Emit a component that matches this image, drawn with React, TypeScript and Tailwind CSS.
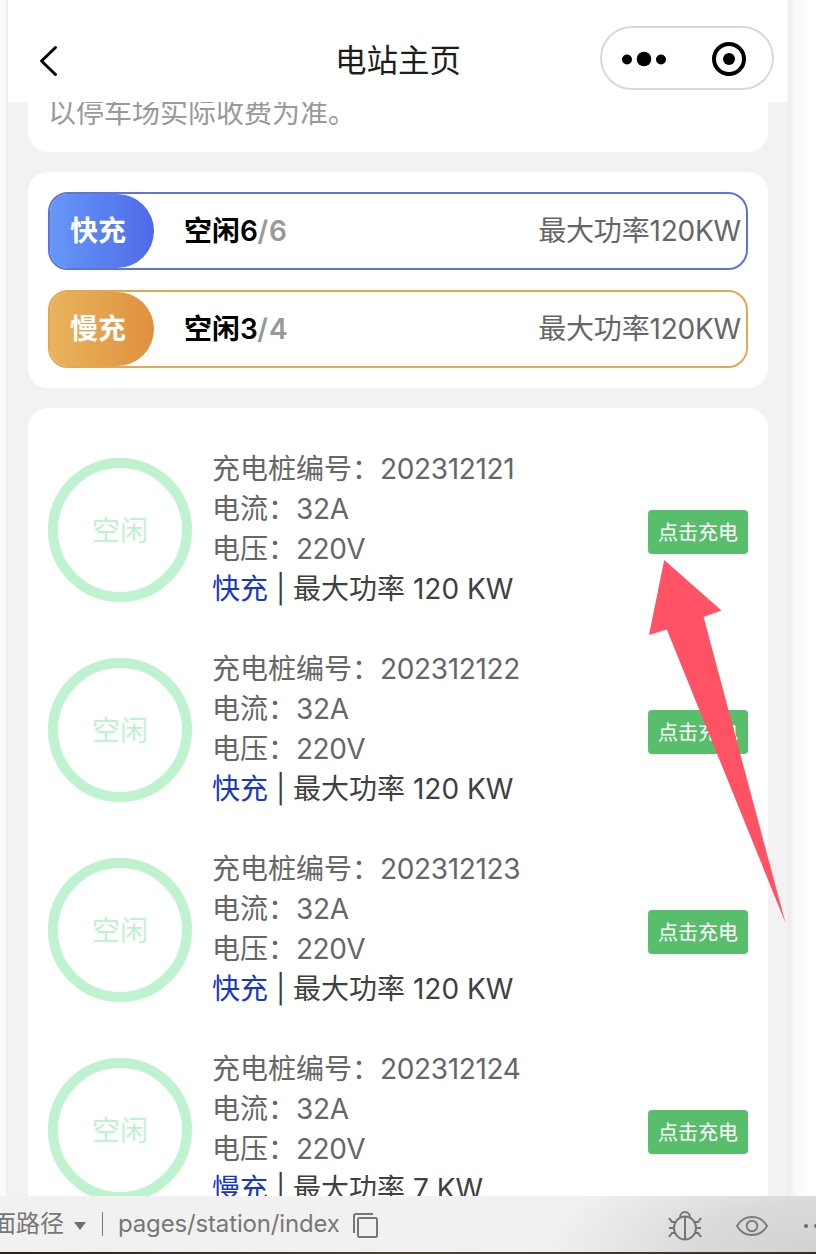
import React from "react";

type Charger = { id: string; type: string; power: string };

const chargers: Charger[] = [
  { id: "202312121", type: "快充", power: "120 KW" },
  { id: "202312122", type: "快充", power: "120 KW" },
  { id: "202312123", type: "快充", power: "120 KW" },
  { id: "202312124", type: "慢充", power: "7 KW" },
];

function Header() {
  return (
    <header className="relative flex h-[102px] shrink-0 items-start bg-white">
      <svg className="mt-[44px] ml-[30px] h-[34px] w-[22px] shrink-0" viewBox="0 0 22 34" fill="none">
        <path d="M17.500 3.500 3.500 17l14 13.500" stroke="#000" strokeWidth="3" strokeLinecap="round" strokeLinejoin="round" />
      </svg>
      <h1 className="mt-[38px] ml-[275px] w-[265px] shrink-0 text-[31.5px] leading-[46px] whitespace-nowrap text-[#1d1d1d]">电站主页</h1>
      <div className="mt-[26px] flex h-[64px] w-[174px] shrink-0 items-center rounded-full border-2 border-[#d9d9d9] pt-[2px]">
        <svg className="ml-[18px] h-[16px] w-[46px]" viewBox="0 0 46 16">
          <circle cx="7" cy="8.5" r="5" />
          <circle cx="24" cy="8" r="7.3" />
          <circle cx="41" cy="8.5" r="5" />
        </svg>
        <svg className="ml-[44px] h-[36px] w-[36px]" viewBox="0 0 36 36">
          <circle cx="19" cy="18" r="15" fill="none" stroke="#000" strokeWidth="4" />
          <circle cx="19" cy="18" r="6" />
        </svg>
      </div>
    </header>
  );
}

function FastRow() {
  return (
    <div className="flex h-[78px] items-center overflow-hidden rounded-[20px] border-2 border-[#5f74d9]">
      <div className="flex h-full w-[104px] shrink-0 items-center rounded-r-[37px] bg-linear-to-r from-[#6797f7] to-[#4e6ae8] pl-[20px] text-[28px] font-bold text-white">
        快充
      </div>
      <Availability free="6" total="6" />
      <span className="mr-[5px] ml-auto text-[28px] tracking-[-0.2px] text-[#666]">最大功率120KW</span>
    </div>
  );
}

function SlowRow() {
  return (
    <div className="flex h-[78px] items-center overflow-hidden rounded-[20px] border-2 border-[#e6a750]">
      <div className="flex h-full w-[104px] shrink-0 items-center rounded-r-[37px] bg-linear-to-r from-[#e8b45d] to-[#e0903e] pl-[20px] text-[28px] font-bold text-white">
        慢充
      </div>
      <Availability free="3" total="4" />
      <span className="mr-[5px] ml-auto text-[28px] tracking-[-0.2px] text-[#666]">最大功率120KW</span>
    </div>
  );
}

function Availability({ free, total }: { free: string; total: string }) {
  return (
    <div className="ml-[30px] text-[28px] font-bold text-black">
      空闲<span className="tracking-[-0.5px] font-semibold">{free}</span>
      <span className="tracking-[1px] font-semibold text-[#999]">/{total}</span>
    </div>
  );
}

function ChargerRow({ item }: { item: Charger }) {
  return (
    <div className="flex h-[200px] shrink-0 items-center">
      <div className="flex h-[144px] w-[144px] shrink-0 items-center justify-center rounded-full border-[10px] border-[#bff3d0] pt-[2px] text-[28px] text-[#bff3d0]">
        空闲
      </div>
      <div className="-mt-[2px] ml-[20px] flex-1 text-[28px] leading-[40px] whitespace-nowrap text-[#666]">
        <div>
          充电桩编号：<span className="tracking-[-0.35px]">{item.id}</span>
        </div>
        <div>
          电流：<span className="tracking-[-0.35px]">32A</span>
        </div>
        <div>
          电压：<span className="tracking-[-0.5px]">220V</span>
        </div>
        <div className="text-[#404040]">
          <span className="text-[#1738c4]">{item.type}</span> | 最大功率 {item.power}
        </div>
      </div>
      <button className="mt-[4px] flex h-[44px] w-[100px] items-center justify-center rounded-[4px] bg-[#59be6b] pt-[2px] text-[20px] text-white">
        点击充电
      </button>
    </div>
  );
}

function StatusBar() {
  return (
    <footer className="flex h-[56px] shrink-0 items-center overflow-hidden bg-[#f1f1f1] bg-[radial-gradient(ellipse_270px_110px_at_100%_100%,#d2d2d2_0%,#dadada_45%,#f1f1f1_100%)] text-[24px] text-[#777]">
      <span className="-ml-[8px] shrink-0">面路径</span>
      <svg className="mt-[3px] ml-[10px] h-[8px] w-[12px] shrink-0" viewBox="0 0 12 8" fill="#707070">
        <path d="M0 0h12L6 8Z" />
      </svg>
      <div className="ml-[16px] h-[24px] w-px shrink-0 bg-[#777]" />
      <span className="ml-[15px] w-[236px] shrink-0 tracking-[-0.15px] whitespace-nowrap">pages/station/index</span>
      <svg className="mt-[4px] -ml-px h-[26px] w-[26px] shrink-0" viewBox="0 0 26 26" fill="none" stroke="#777" strokeWidth="2">
        <path d="M1 20V3a2 2 0 0 1 2-2h17" />
        <rect x="5" y="5" width="19" height="19" rx="1.5" />
      </svg>
      <svg className="mt-[4px] ml-[289px] h-[30px] w-[34px] shrink-0" viewBox="0 0 34 30" fill="none" stroke="#757575" strokeWidth="2">
        <ellipse cx="17" cy="17" rx="11" ry="11.5" />
        <path d="M17 6v22M12 7c0-8 10-8 10 0M1 7l3 4h4M1 17h5M1 26l3-4h4M33 7l-3 4h-4M33 17h-5M33 26l-3-4h-4" />
      </svg>
      <svg className="mt-[3px] ml-[34px] h-[22px] w-[32px] shrink-0" viewBox="0 0 32 22" fill="none" stroke="#7d7d7d" strokeWidth="2">
        <path d="M1 11C5 4 10.500 2 16 2s11 2 15 9c-4 7-9.500 9-15 9S5 18 1 11Z" />
        <circle cx="16" cy="11" r="5.300" />
      </svg>
      <svg className="mt-[3px] ml-[35px] h-[6px] w-[18px] shrink-0" viewBox="0 0 18 6" fill="#6b6b6b">
        <circle cx="3" cy="3" r="2" />
        <circle cx="13" cy="3" r="2" />
      </svg>
    </footer>
  );
}

export default function App() {
  return (
    <div className="relative flex h-[1254px] w-[816px] flex-col overflow-hidden bg-white font-['Inter','Noto_Sans_CJK_SC',sans-serif]">
      <div className="flex h-[1196px] shrink-0 overflow-hidden">
        <div className="w-[8px] shrink-0 bg-linear-to-r from-[#fafafa] from-60% to-[#ebebeb]" />
        <main className="flex w-[780px] shrink-0 flex-col overflow-hidden bg-[#f2f2f2]">
          <Header />
          <div className="flex flex-col gap-[20px] overflow-hidden px-[20px]">
            <section className="h-[50px] shrink-0 overflow-hidden rounded-b-[20px] bg-white pl-[20px]">
              <p className="-mt-[9px] text-[28px] leading-[40px] text-[#999]">以停车场实际收费为准。</p>
            </section>
            <section className="flex h-[216px] shrink-0 flex-col gap-[20px] rounded-[20px] bg-white p-[20px]">
              <FastRow />
              <SlowRow />
            </section>
            <section className="flex shrink-0 flex-col rounded-[20px] bg-white px-[20px] pt-[22px]">
              {chargers.map((item) => (
                <ChargerRow key={item.id} item={item} />
              ))}
            </section>
          </div>
        </main>
        <div className="flex-1 bg-linear-to-r from-[#ebebeb] via-[#f9f9f9] via-25% to-white to-80%" />
      </div>
      <StatusBar />
      <div className="h-[2px] shrink-0 bg-linear-to-r from-[#2b211d] via-[#554232] to-[#382d28]" />
      <svg className="absolute top-[560px] left-[648px] h-[364px] w-[140px]" viewBox="0 0 140 364" fill="#ff5264">
        <path d="M16.200 0 73.500 50.500 55.600 57 137.500 363 18.800 69.500 1 75Z" />
      </svg>
    </div>
  );
}
